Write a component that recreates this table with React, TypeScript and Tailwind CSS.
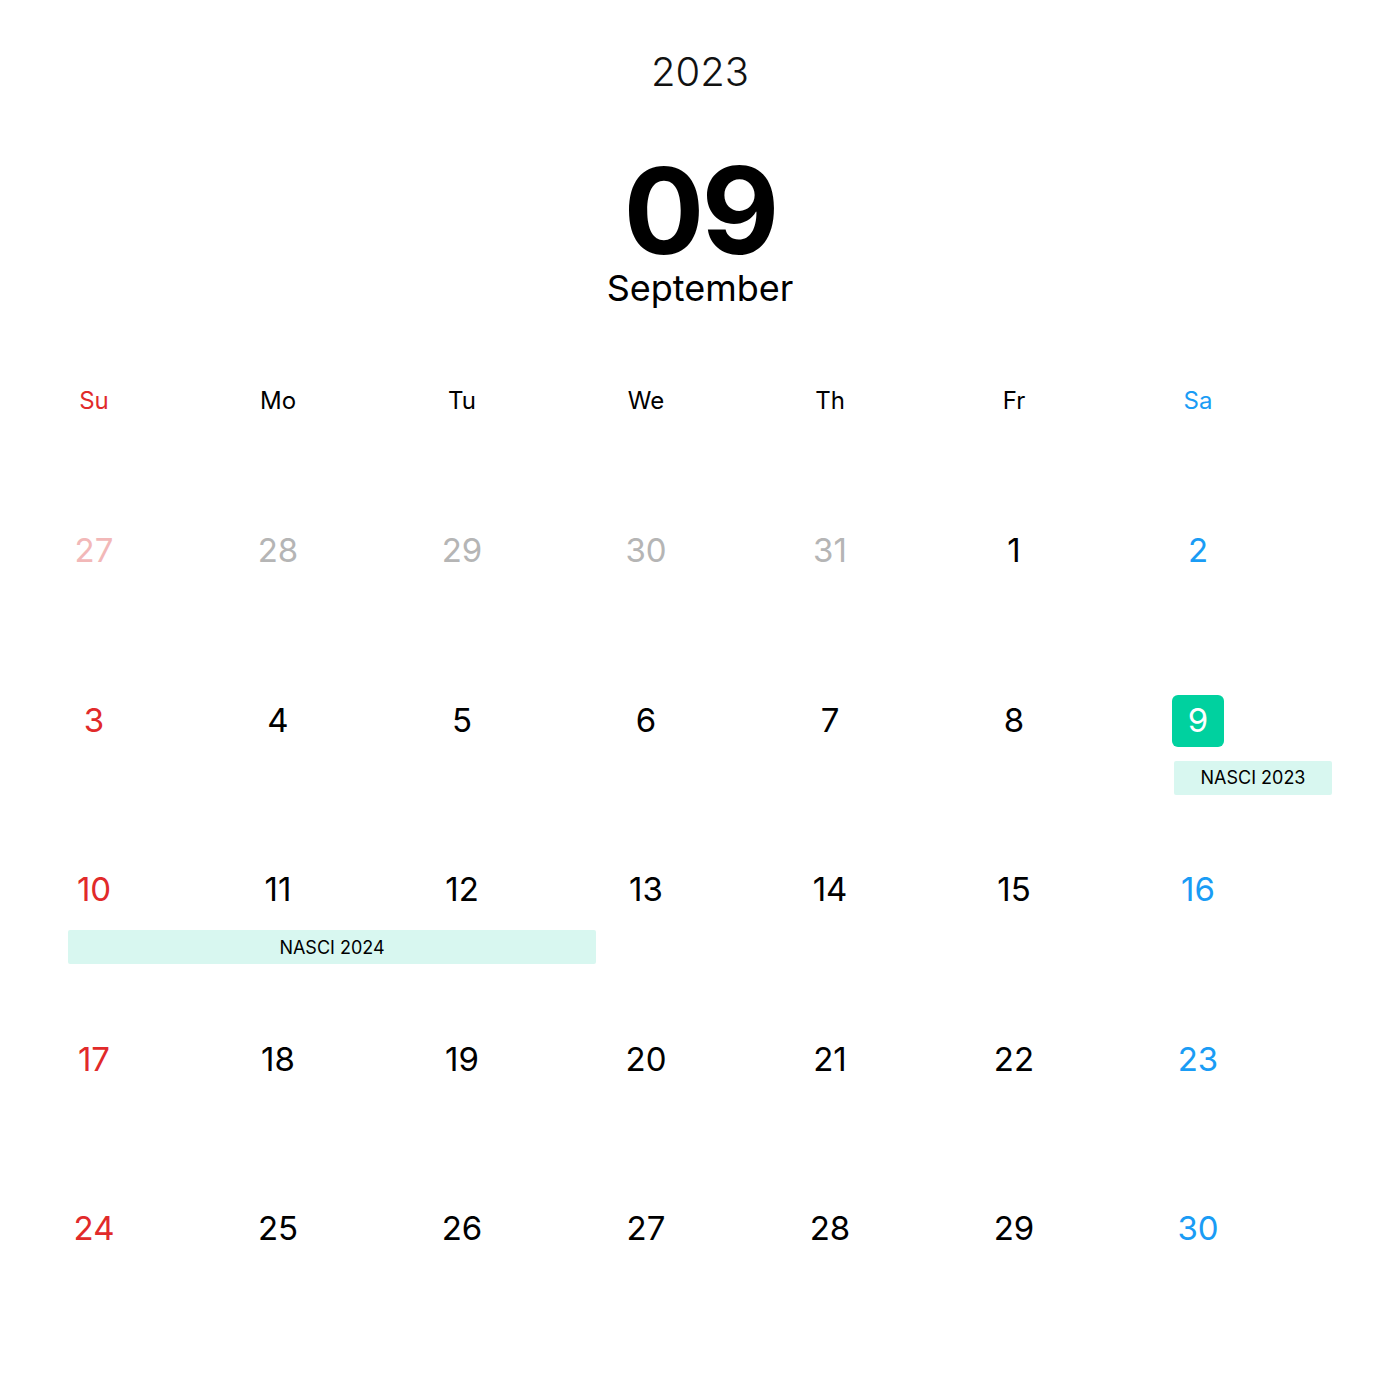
import React from "react";

type Day = { n: number; muted?: boolean; today?: boolean };

const weeks: Day[][] = [
  [{ n: 27, muted: true }, { n: 28, muted: true }, { n: 29, muted: true }, { n: 30, muted: true }, { n: 31, muted: true }, { n: 1 }, { n: 2 }],
  [{ n: 3 }, { n: 4 }, { n: 5 }, { n: 6 }, { n: 7 }, { n: 8 }, { n: 9, today: true }],
  [{ n: 10 }, { n: 11 }, { n: 12 }, { n: 13 }, { n: 14 }, { n: 15 }, { n: 16 }],
  [{ n: 17 }, { n: 18 }, { n: 19 }, { n: 20 }, { n: 21 }, { n: 22 }, { n: 23 }],
  [{ n: 24 }, { n: 25 }, { n: 26 }, { n: 27 }, { n: 28 }, { n: 29 }, { n: 30 }],
];

const heads = ["Su", "Mo", "Tu", "We", "Th", "Fr", "Sa"];

function dayColor(col: number, d: Day) {
  if (d.today) return "text-white";
  if (d.muted) return col === 0 ? "text-[#f2b8b8]" : "text-[#b5b5b5]";
  if (col === 0) return "text-[#e12a2a]";
  if (col === 6) return "text-[#1a9cf5]";
  return "text-black";
}

export default function App() {
  return (
    <div className="w-[1400px] h-[1400px] bg-white font-['Inter',sans-serif] flex flex-col">
      <div className="flex flex-col items-center pt-[50px]">
        <div className="text-[40px] leading-[44px] font-light text-[#111]">2023</div>
        <div className="mt-[62px] text-[120px] leading-[110px] font-bold text-black tracking-[-3px]">09</div>
        <div className="text-[36px] leading-[44px] font-normal text-black">September</div>
      </div>

      <div className="px-[68px] mt-[71px]">
        <div className="grid grid-cols-7 gap-x-6 h-[40px] items-center">
          {heads.map((h, i) => (
            <div key={h} className="w-[52px] text-center">
              <span
                className={`text-[24px] leading-[40px] ${
                  i === 0 ? "text-[#e12a2a]" : i === 6 ? "text-[#1a9cf5]" : "text-black"
                }`}
              >
                {h}
              </span>
            </div>
          ))}
        </div>

        <div className="mt-[104px] flex flex-col">
          {weeks.map((w, wi) => (
            <div key={wi} className="h-[169.5px]">
              <div className="grid grid-cols-7 gap-x-6">
                {w.map((d, i) => (
                  <div key={i} className="flex">
                    <div
                      className={`w-[52px] h-[52px] flex items-center justify-center text-[33px] ${dayColor(i, d)} ${
                        d.today ? "bg-[#00d19f] rounded-[6px]" : ""
                      }`}
                    >
                      {d.n}
                    </div>
                  </div>
                ))}
              </div>
              {wi === 1 && (
                <div className="grid grid-cols-7 gap-x-6 mt-[14px]">
                  <div className="col-start-7 ml-[2px] h-[34px] bg-[#d8f7f0] rounded-[2px] flex items-center justify-center text-[18px] text-black">
                    NASCI 2023
                  </div>
                </div>
              )}
              {wi === 2 && (
                <div className="grid grid-cols-7 gap-x-6 mt-[14px]">
                  <div className="col-span-3 h-[34px] bg-[#d8f7f0] rounded-[2px] flex items-center justify-center text-[18px] text-black">
                    NASCI 2024
                  </div>
                </div>
              )}
            </div>
          ))}
        </div>
      </div>
    </div>
  );
}
